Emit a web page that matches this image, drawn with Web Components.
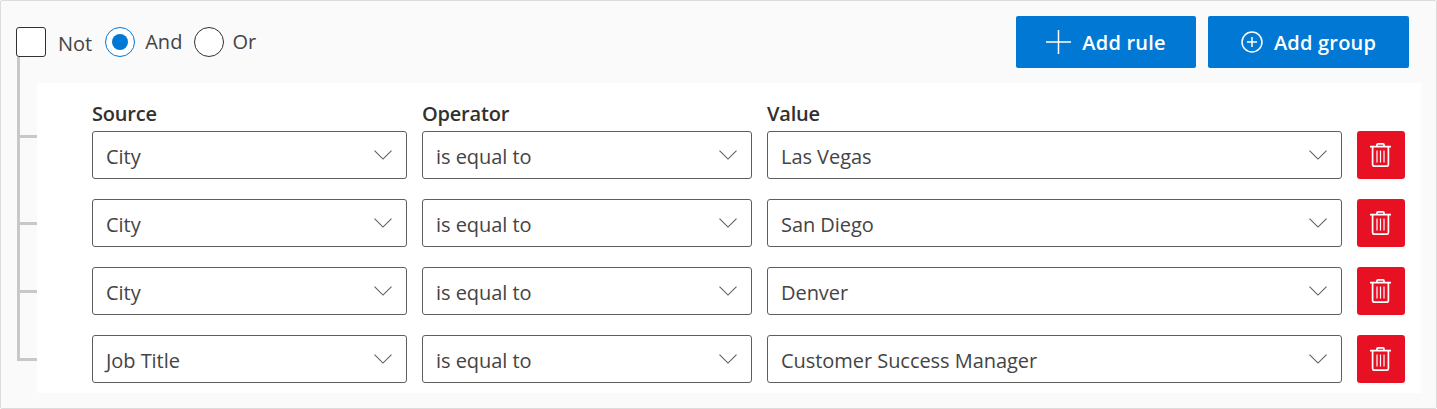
<!DOCTYPE html>
<html>
<head>
<meta charset="utf-8">
<title>Query builder</title>
<style>
html, body { margin: 0; padding: 0; background: #fff; }
body { font-family: "Open Sans", "Noto Sans", "Liberation Sans", sans-serif; }
</style>
</head>
<body>
<query-builder>
    <qb-rule source="City" operator="is equal to" value="Las Vegas" labels></qb-rule>
    <qb-rule source="City" operator="is equal to" value="San Diego"></qb-rule>
    <qb-rule source="City" operator="is equal to" value="Denver"></qb-rule>
    <qb-rule source="Job Title" operator="is equal to" value="Customer Success Manager"></qb-rule>
</query-builder>

<script>
class QbButton extends HTMLElement {
    constructor() {
        super()
        this.attachShadow({mode: 'open'})
        this.shadowRoot.innerHTML = `
        <style>
        :host { display: block; }
        button {
            display: flex; align-items: center; justify-content: center; gap: 11px;
            width: 100%; height: 52px; padding: 0; border: 0; border-radius: 2px;
            background: #0078d4; color: #fff;
            font: 600 20px "Open Sans", sans-serif; letter-spacing: .2px;
        }
        </style>
        <button><slot name="icon"></slot><slot></slot></button>
        `
    }
}

class QbSelect extends HTMLElement {
    static get observedAttributes() {
        return ['text']
    }

    constructor() {
        super()
        this.attachShadow({mode: 'open'})
        this.shadowRoot.innerHTML = `
        <style>
        :host { display: block; }
        .box {
            display: flex; align-items: center; justify-content: space-between;
            box-sizing: border-box; height: 48px; padding: 0 14px 0 13px;
            background: #fff; border: 1px solid #605e5c; border-radius: 3px;
            color: #444; font: 400 20px "Open Sans", sans-serif; letter-spacing: -.05px;
        }
        span { padding-top: 2px; }
        svg { display: block; width: 18px; height: 10px; fill: none; stroke: #605e5c; stroke-width: 1.1; margin-top: -1px; }
        </style>
        <div class="box">
            <span></span>
            <svg viewBox="0 0 18 10"><path d="M.5 .7 9 9.1 17.5 .7"/></svg>
        </div>
        `
    }

    attributeChangedCallback(name, oldVal, newVal) {
        this.shadowRoot.querySelector('span').textContent = newVal
    }
}

class QbRule extends HTMLElement {
    constructor() {
        super()
        this.attachShadow({mode: 'open'})
    }

    connectedCallback() {
        const labels = this.hasAttribute('labels')
        const field = (label, name) => `
            <div class="field">
                ${labels ? `<label>${label}</label>` : ''}
                <qb-select text="${this.getAttribute(name)}"></qb-select>
            </div>`
        this.shadowRoot.innerHTML = `
        <style>
        :host { display: flex; align-items: flex-end; gap: 15px; }
        .field { display: flex; flex-direction: column; }
        .field:nth-child(2) { width: 315px; }
        .field:nth-child(3) { width: 330px; }
        .field:nth-child(4) { width: 575px; }
        label {
            height: 28px;
            color: #323130; font: 600 20px/22px "Open Sans", sans-serif; letter-spacing: -.2px;
        }
        button {
            display: flex; align-items: center; justify-content: center;
            width: 48px; height: 48px; padding: 0; border: 0; border-radius: 3px;
            background: #e81123;
        }
        svg { display: block; width: 21px; height: 24px; margin-right: 1px; fill: none; stroke: #fff; stroke-width: 1.7; }
        </style>
        ${field('Source', 'source')}
        ${field('Operator', 'operator')}
        ${field('Value', 'value')}
        <button>
            <svg viewBox="0 0 21 24">
                <path d="M0 3.6h21M2.6 3.6v18c0 1 .6 1.6 1.6 1.6h12.6c1 0 1.6-.6 1.6-1.6v-18M7 3.6V1.8C7 1.2 7.4.9 8 .9h5c.6 0 1 .3 1 .9v1.8"/>
                <path stroke-width="1.2" d="M7 7.5v12M10.5 7.5v12M14 7.5v12"/>
            </svg>
        </button>
        `
    }
}

class QueryBuilder extends HTMLElement {
    constructor() {
        super()
        this.attachShadow({mode: 'open'})
        this.shadowRoot.innerHTML = `
        <style>
        :host {
            display: block; box-sizing: border-box; width: 1437px; height: 409px;
            padding: 15px 15px 15px 15px;
            background: #fafafa; border: 1px solid #dcdcdc; border-radius: 2px;
            color: #444; font: 400 20px "Open Sans", sans-serif;
        }
        header { display: flex; align-items: center; height: 52px; }
        .check {
            box-sizing: border-box; width: 30px; height: 30px; margin-right: 12px;
            background: #fff; border: 1px solid #323130; border-radius: 3px;
        }
        .radio {
            box-sizing: border-box; width: 30px; height: 30px; margin-right: 10px;
            background: #fff; border: 1px solid #323130; border-radius: 50%;
        }
        .radio.on { border-color: #0078d4; display: flex; align-items: center; justify-content: center; }
        .radio.on::after { content: ""; width: 16px; height: 16px; border-radius: 50%; background: #0078d4; }
        .not { margin: 3px 13px 0 0; }
        .and { margin: 0 12px 0 0; }
        .or { margin-left: -2px; }
        .and, .or { padding-bottom: 1px; }
        .actions { display: flex; gap: 12px; margin-left: auto; margin-right: 12px; }
        .actions qb-button:first-child { width: 180px; }
        .actions qb-button:last-child { width: 201px; }
        .body { display: flex; margin-top: 15px; }
        .tree { width: 20px; margin: -26px 0 0 1px; flex: none; }
        .seg { box-sizing: border-box; border-left: 3px solid #c8c8c8; border-bottom: 3px solid #c8c8c8; height: 68px; }
        .seg:first-child { height: 81px; }
        .seg:nth-child(2) { height: 87px; }
        .panel {
            flex: 1; display: flex; flex-direction: column; gap: 20px;
            height: 310px; box-sizing: border-box; padding: 20px 16px 10px 55px;
            background: #fff; border-radius: 2px;
        }
        </style>
        <header>
            <div class="check"></div>
            <span class="not">Not</span>
            <div class="radio on"></div>
            <span class="and">And</span>
            <div class="radio"></div>
            <span class="or">Or</span>
            <div class="actions">
                <qb-button>
                    <svg slot="icon" style="display:block" width="25" height="24" viewBox="0 0 25 24" fill="none" stroke="#fff" stroke-width="1.5"><path d="M12.5 0v24M0 12h25"/></svg>
                    Add rule
                </qb-button>
                <qb-button>
                    <svg slot="icon" style="display:block" width="22" height="22" viewBox="0 0 22 22" fill="none" stroke="#fff" stroke-width="1.5"><circle cx="11" cy="11" r="10"/><path d="M11 6v10M6 11h10"/></svg>
                    Add group
                </qb-button>
            </div>
        </header>
        <div class="body">
            <div class="tree">
                <div class="seg"></div><div class="seg"></div><div class="seg"></div><div class="seg"></div>
            </div>
            <div class="panel"><slot></slot></div>
        </div>
        `
    }
}

customElements.define('qb-button', QbButton)
customElements.define('qb-select', QbSelect)
customElements.define('qb-rule', QbRule)
customElements.define('query-builder', QueryBuilder)
</script>
</body>
</html>
